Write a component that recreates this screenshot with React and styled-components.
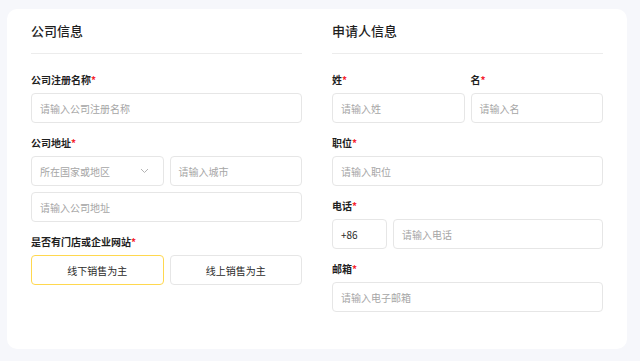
import React from 'react';
import styled, { createGlobalStyle } from 'styled-components';

const GlobalStyle = createGlobalStyle`
   html, body {
      margin: 0;
      padding: 0;
      background: #f6f7fb;
      font-family: "Noto Sans CJK SC", "Noto Sans", sans-serif;
   }
`;

const Page = styled.div`
   width: 640px;
   height: 361px;
   padding: 9px 13px 12px 7px;
   box-sizing: border-box;
`;

const Card = styled.div`
   background: #fff;
   border-radius: 10px;
   height: 340px;
   padding: 12px 24px 0;
   box-sizing: border-box;
   display: grid;
   grid-template-columns: 271px 271px;
   column-gap: 30px;
   align-items: start;
`;

const Section = styled.div`
   display: flex;
   flex-direction: column;
`;

const Title = styled.h2`
   margin: 0;
   font-size: 13px;
   line-height: 20px;
   font-weight: 500;
   color: #1f1f1f;
`;

const Divider = styled.div`
   height: 1px;
   background: #ececec;
   margin: 12px 0 19px;
`;

const Field = styled.div`
   display: flex;
   flex-direction: column;
   margin-bottom: 13px;
   flex: ${props => props.flex || 'none'};
   min-width: 0;
`;

const Label = styled.div`
   font-size: 10px;
   line-height: 14px;
   font-weight: 700;
   color: #1f1f1f;
   margin-bottom: 6px;
`;

const Star = styled.span`
   color: #f5222d;
`;

const Row = styled.div`
   display: flex;
   gap: 6px;
   & + & {
      margin-top: 6px;
   }
`;

const Box = styled.div`
   flex: ${props => props.flex || '1 1 0'};
   width: ${props => (props.width ? `${props.width}px` : 'auto')};
   min-width: 0;
   height: 30px;
   min-height: 30px;
   box-sizing: border-box;
   border: 1px solid ${props => (props.active ? '#ffd84f' : '#e6e6e6')};
   border-radius: 4px;
   display: flex;
   align-items: center;
   justify-content: ${props => (props.center ? 'center' : 'space-between')};
   padding: 0 8px;
   font-size: 10px;
   color: ${props => (props.value ? '#2b2b2b' : '#a6a6a6')};
   background: #fff;
`;

const Chevron = () => (
   <svg width="9" height="6" viewBox="0 0 9 6" style={{ marginRight: 6 }}>
      <path d="M1 1l3.5 3.5L8 1" fill="none" stroke="#b3b3b3" strokeWidth="1" />
   </svg>
);

const Req = ({ children }) => (
   <Label>
      {children}
      <Star>*</Star>
   </Label>
);

export default function App() {
   return (
      <Page>
         <GlobalStyle />
         <Card>
            <Section>
               <Title>公司信息</Title>
               <Divider />
               <Field>
                  <Req>公司注册名称</Req>
                  <Box flex="none">请输入公司注册名称</Box>
               </Field>
               <Field>
                  <Req>公司地址</Req>
                  <Row>
                     <Box>
                        所在国家或地区
                        <Chevron />
                     </Box>
                     <Box>请输入城市</Box>
                  </Row>
                  <Row>
                     <Box>请输入公司地址</Box>
                  </Row>
               </Field>
               <Field>
                  <Req>是否有门店或企业网站</Req>
                  <Row>
                     <Box center value active>线下销售为主</Box>
                     <Box center value>线上销售为主</Box>
                  </Row>
               </Field>
            </Section>
            <Section>
               <Title>申请人信息</Title>
               <Divider />
               <Row>
                  <Field flex="1 1 0">
                     <Req>姓</Req>
                     <Box flex="none">请输入姓</Box>
                  </Field>
                  <Field flex="1 1 0">
                     <Req>名</Req>
                     <Box flex="none">请输入名</Box>
                  </Field>
               </Row>
               <Field>
                  <Req>职位</Req>
                  <Box flex="none">请输入职位</Box>
               </Field>
               <Field>
                  <Req>电话</Req>
                  <Row>
                     <Box flex="none" width={55} value>+86</Box>
                     <Box>请输入电话</Box>
                  </Row>
               </Field>
               <Field>
                  <Req>邮箱</Req>
                  <Box flex="none">请输入电子邮箱</Box>
               </Field>
            </Section>
         </Card>
      </Page>
   );
}
